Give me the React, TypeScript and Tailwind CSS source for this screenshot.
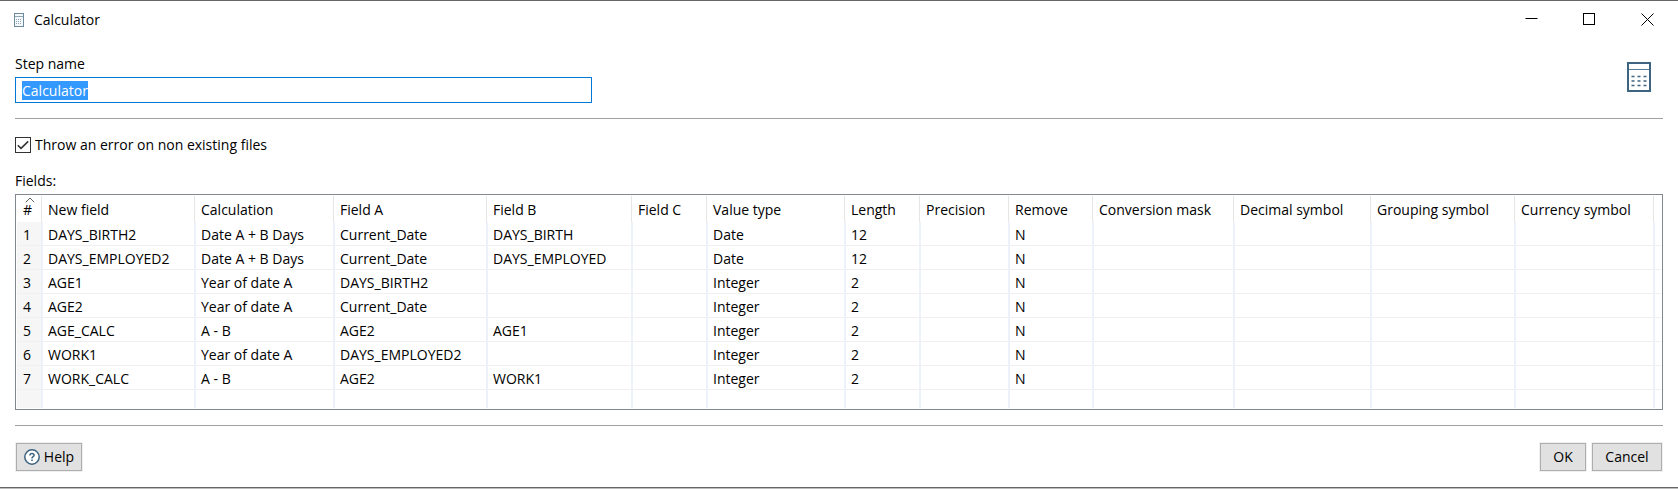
import { useEffect, useRef, useState } from "react";

type Row = string[];

const columns = [
  { label: "#", width: "w-[26px]" },
  { label: "New field", width: "w-[153px]" },
  { label: "Calculation", width: "w-[139px]" },
  { label: "Field A", width: "w-[153px]" },
  { label: "Field B", width: "w-[145px]" },
  { label: "Field C", width: "w-[75px]" },
  { label: "Value type", width: "w-[138px]" },
  { label: "Length", width: "w-[75px]" },
  { label: "Precision", width: "w-[89px]" },
  { label: "Remove", width: "w-[84px]" },
  { label: "Conversion mask", width: "w-[141px]" },
  { label: "Decimal symbol", width: "w-[137px]" },
  { label: "Grouping symbol", width: "w-[144px]" },
  { label: "Currency symbol", width: "w-[139px]" },
];

const rows: Row[] = [
  ["1", "DAYS_BIRTH2", "Date A + B Days", "Current_Date", "DAYS_BIRTH", "", "Date", "12", "", "N"],
  ["2", "DAYS_EMPLOYED2", "Date A + B Days", "Current_Date", "DAYS_EMPLOYED", "", "Date", "12", "", "N"],
  ["3", "AGE1", "Year of date A", "DAYS_BIRTH2", "", "", "Integer", "2", "", "N"],
  ["4", "AGE2", "Year of date A", "Current_Date", "", "", "Integer", "2", "", "N"],
  ["5", "AGE_CALC", "A - B", "AGE2", "AGE1", "", "Integer", "2", "", "N"],
  ["6", "WORK1", "Year of date A", "DAYS_EMPLOYED2", "", "", "Integer", "2", "", "N"],
  ["7", "WORK_CALC", "A - B", "AGE2", "WORK1", "", "Integer", "2", "", "N"],
];

function CalculatorIcon({ className }: { className: string }) {
  return (
    <svg className={className} viewBox="0 0 24 30" fill="none" aria-hidden="true">
      <rect x="1" y="1" width="22" height="28" stroke="#3d6480" strokeWidth="2" />
      <path d="M2 7.5H22" stroke="#5b7d95" />
      <path
        d="M4.5 14.5H7.5M10.5 14.5H13.5M16.5 14.5H19.5M4.5 19H7.5M10.5 19H13.5M16.5 19H19.5M4.5 23.5H7.5M10.5 23.5H13.5M16.5 23.5H19.5"
        stroke="#3d6480"
        strokeWidth="1.6"
      />
    </svg>
  );
}

function TitleIcon() {
  return (
    <svg className="h-[14px] w-[10px]" viewBox="0 0 10 14" fill="none" aria-hidden="true">
      <rect x="0.5" y="0.5" width="9" height="13" fill="#f4f8fa" stroke="#6f8a9c" />
      <path d="M1 3.5H9" stroke="#8fa5b3" />
      <path d="M2 6.5H8M2 8.5H8M2 10.5H8" stroke="#8fa5b3" strokeDasharray="1 1" />
    </svg>
  );
}

function TitleBar() {
  const button = "flex h-full w-[58px] items-center justify-center";
  return (
    <header className="flex h-[37px] items-center pr-[2px] pl-[14px]">
      <TitleIcon />
      <h1 className="ml-[10px] flex-1">Calculator</h1>
      <div className="flex h-full">
        <button type="button" aria-label="Minimize" className={button}>
          <svg className="size-[13px]" viewBox="0 0 13 13" stroke="#000">
            <path d="M0.5 5.5H12.5" />
          </svg>
        </button>
        <button type="button" aria-label="Maximize" className={button}>
          <svg className="size-[13px]" viewBox="0 0 13 13" stroke="#000" fill="none">
            <rect x="0.5" y="0.5" width="11" height="11" />
          </svg>
        </button>
        <button type="button" aria-label="Close" className={button}>
          <svg className="size-[13px]" viewBox="0 0 13 13" stroke="#000">
            <path d="M0.5 0.5L12.5 12.5M12.5 0.5L0.5 12.5" />
          </svg>
        </button>
      </div>
    </header>
  );
}

function FieldsTable() {
  return (
    <div className="overflow-hidden border border-[#828790] p-px">
      <table aria-labelledby="fields-label" className="w-full table-fixed border-separate border-spacing-0 whitespace-nowrap">
        <thead>
          <tr>
            {columns.map((column, index) => (
              <th key={column.label} scope="col" className={`${column.width} p-0 pr-px text-left font-normal`}>
                <div
                  className={`relative flex h-[26px] items-center border-r border-[#e5e5e5] pt-px ${index === 0 ? "pl-[6px]" : "pl-[5px]"}`}
                >
                  {index === 0 && (
                    <svg className="absolute top-px left-2 h-[6px] w-[10px]" viewBox="0 0 10 6" fill="none" stroke="#606060">
                      <path d="M0.8 5.2L5 1L9.2 5.2" />
                    </svg>
                  )}
                  {column.label}
                </div>
              </th>
            ))}
            <td />
          </tr>
        </thead>
        <tbody>
          {rows.map((row) => (
            <tr key={row[0]}>
              {columns.map((column, index) => (
                <td
                  key={column.label}
                  className={`h-6 border-r-2 border-b border-r-[#edf1fa] border-b-[#f0f0f0] p-0 pt-[2px] leading-[21px] ${index === 0 ? "bg-[#f6f6f6] pl-[6px]" : "pl-[5px]"}`}
                >
                  {row[index]}
                </td>
              ))}
              <td className="border-b border-[#f0f0f0]" />
            </tr>
          ))}
          <tr>
            {columns.map((column, index) => (
              <td
                key={column.label}
                className={`h-[18px] border-r-2 border-r-[#edf1fa] p-0 ${index === 0 ? "bg-[#f6f6f6]" : ""}`}
              />
            ))}
            <td />
          </tr>
        </tbody>
      </table>
    </div>
  );
}

export default function App() {
  const nameRef = useRef<HTMLInputElement>(null);
  const [name, setName] = useState("Calculator");
  const [strict, setStrict] = useState(true);

  useEffect(() => {
    nameRef.current?.focus();
    nameRef.current?.select();
  }, []);

  const button =
    "flex h-7 items-center justify-center border border-[#adadad] bg-[#e1e1e1] outline outline-[#f0f0f0]";

  return (
    <div className="bg-[#bdbdbd] pb-px font-['Open_Sans',sans-serif] text-[14px] leading-5 text-black">
      <div className="border-t border-b border-[#666] bg-white">
        <TitleBar />
        <main className="px-[15px] pb-4">
          <div className="flex h-[81px] items-start justify-between border-b border-[#a0a0a0] pt-4">
            <div className="w-[35%]">
              <label htmlFor="step-name" className="block">
                Step name
              </label>
              <input
                id="step-name"
                ref={nameRef}
                value={name}
                onChange={(event) => setName(event.target.value)}
                className="mt-[3px] block h-[26px] w-full border border-[#0078d7] px-[6px] outline-none selection:bg-[#3399ff] selection:text-white"
              />
            </div>
            <CalculatorIcon className="mt-2 mr-3 h-[30px] w-6" />
          </div>

          <label className="mt-4 flex items-center gap-1">
            <span className="relative flex size-4">
              <input
                type="checkbox"
                checked={strict}
                onChange={(event) => setStrict(event.target.checked)}
                className="peer size-4 appearance-none border border-[#333] bg-white"
              />
              <svg
                className="pointer-events-none absolute inset-0 hidden size-4 peer-checked:block"
                viewBox="0 0 16 16"
                fill="none"
                stroke="#333"
                strokeWidth="1.5"
              >
                <path d="M2.8 8.2L6 11.4L13.2 4.4" />
              </svg>
            </span>
            Throw an error on non existing files
          </label>

          <p id="fields-label" className="mt-4 mb-[3px]">
            Fields:
          </p>
          <FieldsTable />

          <footer className="mt-[15px] flex items-center gap-[6px] border-t border-[#a0a0a0] px-px pt-[17px]">
            <button type="button" className={`${button} mr-auto w-[66px] gap-1`}>
              <svg className="size-4" viewBox="0 0 16 16" fill="none" stroke="#3d6480">
                <circle cx="8" cy="8" r="7.2" strokeWidth="1.5" fill="#fff" />
                <path d="M5.9 6.4C5.9 3.8 10.1 3.9 10.1 6.3C10.1 7.7 8 7.7 8 9.4M8 10.6V12.1" strokeWidth="1.5" />
              </svg>
              Help
            </button>
            <button type="button" className={`${button} w-[46px]`}>
              OK
            </button>
            <button type="button" className={`${button} w-[70px]`}>
              Cancel
            </button>
          </footer>
        </main>
      </div>
    </div>
  );
}
